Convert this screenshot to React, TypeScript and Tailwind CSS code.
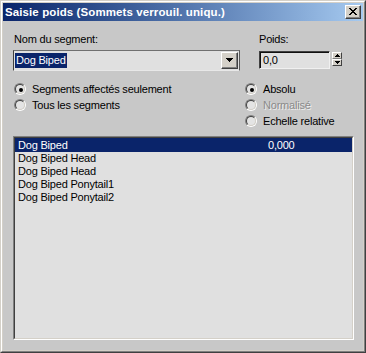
import React from "react";

const font = { fontFamily: '"Liberation Sans", Arial, sans-serif' };

function Radio({ checked }: { checked?: boolean }) {
  return (
    <div className="relative w-[12px] h-[12px] rounded-full border border-t-[#808080] border-l-[#808080] border-r-white border-b-white shrink-0">
      <div className="absolute inset-0 rounded-full border border-t-[#404040] border-l-[#404040] border-r-[#d4d0c8] border-b-[#d4d0c8] bg-[#e4e4e4]">
        {checked && (
          <div className="absolute left-[3px] top-[3px] w-[4px] h-[4px] rounded-full bg-black" />
        )}
      </div>
    </div>
  );
}

function RadioRow({
  label,
  checked,
  disabled,
}: {
  label: string;
  checked?: boolean;
  disabled?: boolean;
}) {
  return (
    <div className="flex items-center gap-[6px] h-[16px]">
      <Radio checked={checked} />
      <span
        className={
          disabled
            ? "text-[#8a8a8a] [text-shadow:1px_1px_0_#eeeeee]"
            : "text-black"
        }
      >
        {label}
      </span>
    </div>
  );
}

export default function App() {
  const rows = [
    "Dog Biped",
    "Dog Biped Head",
    "Dog Biped Head",
    "Dog Biped Ponytail1",
    "Dog Biped Ponytail2",
  ];
  return (
    <div
      className="w-[366px] h-[353px] flex border border-t-[#d4d0c8] border-l-[#d4d0c8] border-r-[#404040] border-b-[#404040] text-[11px] leading-[13px] tracking-[-0.2px]"
      style={font}
    >
      <div className="flex-1 flex border border-t-white border-l-white border-r-[#808080] border-b-[#808080]">
        <div className="flex-1 flex flex-col p-[1px] bg-[#d4d0c8]">
          {/* Title bar */}
          <div className="h-[18px] flex items-center justify-between bg-gradient-to-r from-[#0a246a] to-[#a6caf0] pl-[2px] pr-[2px]">
            <span className="text-white font-bold text-[11.5px] tracking-[0.1px]">
              Saisie poids (Sommets verrouil. uniqu.)
            </span>
            <div className="w-[16px] h-[14px] flex border border-t-white border-l-white border-r-[#404040] border-b-[#404040]">
              <div className="flex-1 flex items-center justify-center bg-[#d4d0c8] border-r border-b border-[#808080]">
                <svg width="8" height="7" viewBox="0 0 8 7">
                  <path
                    d="M0 0h2v1h1v1h2v-1h1v-1h2v1h-1v1h-1v1h-1v1h1v1h1v1h1v1h-2v-1h-1v-1h-2v1h-1v1h-2v-1h1v-1h1v-1h1v-1h-1v-1h-1v-1h-1z"
                    fill="black"
                  />
                </svg>
              </div>
            </div>
          </div>
          {/* Body */}
          <div className="flex-1 flex flex-col bg-[#c8c8c8] pl-[10px] pr-[9px] pt-[12px] pb-[10px]">
            {/* Top row */}
            <div className="flex">
              <div className="w-[227px] flex flex-col">
                <div className="h-[13px] pl-[1px]">Nom du segment:</div>
                <div className="mt-[4px] h-[21px] flex border border-t-[#707070] border-l-[#404040] border-r-[#585858] border-b-[#e8e8e8] bg-[#e0e0e0]">
                  <div className="flex-1 flex items-center pl-[1px]">
                    <span className="bg-[#0a246a] text-white h-[15px] leading-[15px] px-[1px]">
                      Dog Biped
                    </span>
                  </div>
                  <div className="w-[17px] my-[1px] mr-[1px] flex border border-t-white border-l-white border-r-[#404040] border-b-[#404040]">
                    <div className="flex-1 flex items-center justify-center bg-[#d4d0c8] border-r border-b border-[#808080]">
                      <svg width="7" height="5" viewBox="0 0 7 5">
                        <path d="M0 0h7v1h-1v1h-1v1h-1v1h-1v-1h-1v-1h-1v-1h-1z" fill="black" />
                      </svg>
                    </div>
                  </div>
                </div>
              </div>
              <div className="ml-[19px] flex flex-col">
                <div className="h-[13px]">Poids:</div>
                <div className="mt-[5px] flex items-start gap-[2px]">
                  <div className="w-[71px] h-[18px] flex border border-t-[#404040] border-l-[#404040] border-r-[#f0f0f0] border-b-[#f0f0f0]">
                    <div className="flex-1 flex items-center pl-[2px] bg-[#e0e0e0] border-t border-l border-[#101010]">
                      0,0
                    </div>
                  </div>
                  <div className="flex flex-col w-[10px] mt-[1px]">
                    <div className="h-[7px] flex items-center justify-center bg-[#d4d0c8] border border-t-white border-l-white border-r-[#404040] border-b-[#808080]">
                      <svg width="5" height="3" viewBox="0 0 5 3">
                        <path d="M2 0h1v1h1v1h1v1h-5v-1h1v-1h1z" fill="black" />
                      </svg>
                    </div>
                    <div className="h-[7px] flex items-center justify-center bg-[#d4d0c8] border border-t-white border-l-white border-r-[#404040] border-b-[#404040]">
                      <svg width="5" height="3" viewBox="0 0 5 3">
                        <path d="M0 0h5v1h-1v1h-1v1h-1v-1h-1v-1h-1z" fill="black" />
                      </svg>
                    </div>
                  </div>
                </div>
              </div>
            </div>
            {/* Radios */}
            <div className="flex mt-[10px]">
              <div className="w-[232px] flex flex-col pl-[1px]">
                <RadioRow label="Segments affectés seulement" checked />
                <RadioRow label="Tous les segments" />
              </div>
              <div className="flex flex-col">
                <RadioRow label="Absolu" checked />
                <RadioRow label="Normalisé" disabled />
                <RadioRow label="Echelle relative" />
              </div>
            </div>
            {/* List */}
            <div className="mt-[7px] flex-1 flex border border-t-[#808080] border-l-[#808080] border-r-white border-b-white">
              <div className="flex-1 flex flex-col border border-t-[#404040] border-l-[#404040] border-r-[#d4d0c8] border-b-[#d4d0c8] bg-[#e0e0e0]">
                {rows.map((r, i) => (
                  <div
                    key={i}
                    className={`flex ${
                      i === 0
                        ? "bg-[#0a246a] text-white h-[14px] leading-[14px]"
                        : "text-black h-[13px] leading-[13px]"
                    }`}
                  >
                    <span className="w-[253px] pl-[3px]">{r}</span>
                    {i === 0 && <span>0,000</span>}
                  </div>
                ))}
              </div>
            </div>
          </div>
        </div>
      </div>
    </div>
  );
}
